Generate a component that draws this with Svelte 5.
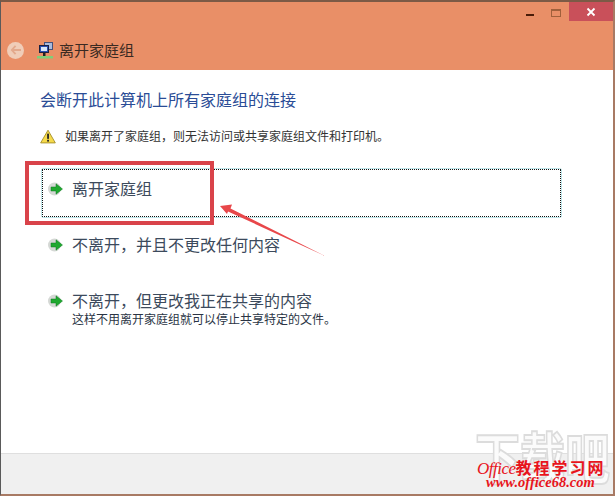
<script>
  const commands = [
    { title: '离开家庭组', selected: true },
    { title: '不离开，并且不更改任何内容' },
    { title: '不离开，但更改我正在共享的内容', note: '这样不用离开家庭组就可以停止共享特定的文件。' }
  ];
</script>

<div class="window">
  <header class="head">
    <div class="controls">
      <span class="ctl"><i class="min"></i></span>
      <span class="ctl"><i class="max"></i></span>
      <span class="close">
        <svg width="10" height="10" viewBox="0 0 10 10"><path d="M1.5 1.5l7 7M8.5 1.5l-7 7" stroke="#fff" stroke-width="1.8" /></svg>
      </span>
    </div>
    <div class="nav">
      <span class="back">
        <svg width="12" height="10" viewBox="0 0 14 12"><path d="M6.5 1L2 6l4.500 5M2.500 6H13" fill="none" stroke="#e3a98c" stroke-width="2.200" /></svg>
      </span>
      <svg class="netico" width="17" height="18" viewBox="0 0 17 18">
        <rect x="7.500" y="1.500" width="8" height="7" fill="#a9bbdc" stroke="#44507a" />
        <rect x="2.500" y="4.500" width="9" height="7" fill="#2a4fb0" stroke="#1a1f40" />
        <rect x="4" y="6" width="6" height="4" fill="#d8e6f8" />
        <rect x="6" y="12" width="2.500" height="3" fill="#222" />
        <rect x="0" y="15" width="16" height="2.500" fill="#7fce78" />
      </svg>
      <span class="page">离开家庭组</span>
    </div>
  </header>

  <main class="body">
    <h1>会断开此计算机上所有家庭组的连接</h1>
    <div class="warn">
      <svg width="16" height="15" viewBox="0 0 17 15">
        <path d="M8.500 .8L16.300 14.300H.7z" fill="#f6da4a" stroke="#a8912c" stroke-linejoin="round" />
        <rect x="7.600" y="4.500" width="1.900" height="5.500" fill="#222" />
        <rect x="7.600" y="11" width="1.900" height="1.900" fill="#222" />
      </svg>
      <span>如果离开了家庭组，则无法访问或共享家庭组文件和打印机。</span>
    </div>
    <div class="list">
      {#each commands as c}
        <div class="cmd" class:selected={c.selected}>
          <svg class="go" width="16" height="14" viewBox="0 0 16 14">
            <ellipse cx="6.500" cy="7" rx="6.500" ry="6.500" fill="#d5d8d5" />
            <path d="M3 5H8V1.800L14.500 7L8 12.200V9H3z" fill="#1fa82f" stroke="#0f7a20" stroke-width=".5" />
          </svg>
          <div>
            <div class="title">{c.title}</div>
            {#if c.note}<div class="note">{c.note}</div>{/if}
          </div>
        </div>
      {/each}
    </div>
  </main>

  <footer class="foot"></footer>

  <div class="mark-rect"></div>
  <svg class="arrow" width="108" height="54" viewBox="0 0 108 54">
    <path d="M0 2L12 .5L10.500 4.500L105 52L8 7.500L7 10z" fill="#e8474a" />
  </svg>

  <div class="stamp">
    <div class="ghost">下载吧</div>
    <div class="brand"><em>Office</em><b>教程学习网</b></div>
    <div class="url">www.office68.com</div>
  </div>
</div>

<style>
  :global(body) {
    margin: 0;
    background: #fff;
  }

  .window {
    position: relative;
    box-sizing: border-box;
    width: 615px;
    height: 496px;
    display: flex;
    flex-direction: column;
    overflow: hidden;
    border-top: 2px solid #7c5a46;
    border-left: 1px solid #5a5a5a;
    border-right: 2px solid #a87a64;
    border-bottom: 2px solid #a87a64;
    font-family: "Noto Sans CJK SC", sans-serif;
  }

  .head {
    height: 68px;
    flex: none;
    background: #e98f67;
    display: flex;
    flex-direction: column;
  }

  .controls {
    height: 19px;
    display: flex;
    justify-content: flex-end;
  }

  .ctl {
    width: 26px;
    display: flex;
    align-items: center;
    justify-content: center;
  }

  .min {
    width: 8px;
    height: 2px;
    background: #4a1c08;
    margin-top: 6px;
  }

  .max {
    box-sizing: border-box;
    width: 10px;
    height: 8px;
    border: 1px solid #a0603c;
    border-top-width: 2px;
    margin-top: 2px;
  }

  .close {
    width: 44px;
    display: flex;
    align-items: center;
    justify-content: center;
    background: #c9505a;
  }

  .nav {
    display: flex;
    align-items: center;
    padding: 19px 0 0 6px;
  }

  .back {
    width: 17px;
    height: 17px;
    border-radius: 50%;
    background: #f0cdb8;
    display: flex;
    align-items: center;
    justify-content: center;
  }

  .netico {
    margin-left: 13px;
  }

  .page {
    margin-left: 5px;
    font-size: 15px;
    line-height: 20px;
    color: #3a2a22;
  }

  .body {
    flex: 1;
    padding: 18px 51px 0 39px;
    background: #fff;
  }

  h1 {
    margin: 0;
    font-size: 16px;
    line-height: 22px;
    font-weight: 400;
    color: #2a4c96;
  }

  .warn {
    display: flex;
    align-items: center;
    gap: 9px;
    margin-top: 17px;
    font-size: 12px;
    line-height: 18px;
    color: #333;
  }

  .list {
    margin-top: 23px;
    display: flex;
    flex-direction: column;
    gap: 6px;
  }

  .cmd {
    box-sizing: border-box;
    min-height: 50px;
    padding: 8px 8px 0 6px;
    display: flex;
    align-items: flex-start;
    gap: 8px;
    margin-left: 1px;
    border: 1px solid transparent;
  }

  .cmd.selected {
    border-color: #bfe6ea;
    border-radius: 2px;
    outline: 1px dotted #111;
    outline-offset: -2px;
  }

  .go {
    margin-top: 5px;
    flex: none;
  }

  .title {
    font-size: 16px;
    line-height: 22px;
    color: #3c4a5c;
  }

  .note {
    font-size: 12px;
    line-height: 14px;
    margin-top: 1px;
    color: #2a3444;
  }

  .foot {
    height: 40px;
    flex: none;
    background: #f0f0f0;
    border-top: 1px solid #dfdfdf;
  }

  .mark-rect {
    position: absolute;
    left: 24px;
    top: 159px;
    width: 181px;
    height: 56px;
    border: 4px solid #d9434a;
  }

  .arrow {
    position: absolute;
    left: 219px;
    top: 202px;
  }

  .stamp {
    position: absolute;
    right: 0;
    bottom: 0;
    width: 140px;
    height: 70px;
  }

  .ghost {
    position: absolute;
    left: 2px;
    top: -9px;
    font-size: 45px;
    line-height: 64px;
    font-weight: 700;
    color: #fbfbfb;
    -webkit-text-stroke: 1.500px #dcdcdc;
    white-space: nowrap;
    transform: scaleY(1.25);
    transform-origin: top;
  }

  .brand {
    position: absolute;
    left: 4px;
    top: 34px;
    white-space: nowrap;
    color: #e8141c;
    line-height: 18px;
  }

  .brand em {
    font-family: "Liberation Serif", serif;
    font-size: 17px;
    font-weight: 400;
    letter-spacing: -0.5px;
  }

  .brand b {
    font-size: 16px;
    letter-spacing: 2px;
  }

  .url {
    position: absolute;
    left: 13px;
    top: 50px;
    white-space: nowrap;
    color: #e8141c;
    font-family: "Liberation Serif", serif;
    font-style: italic;
    font-weight: 700;
    font-size: 14.500px;
    line-height: 17px;
  }
</style>
